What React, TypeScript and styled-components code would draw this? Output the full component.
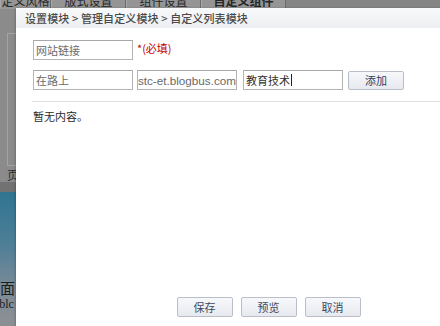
import React from 'react';
import styled, { createGlobalStyle } from 'styled-components';

const GlobalStyle = createGlobalStyle`
  html, body {
    margin: 0;
    padding: 0;
    width: 440px;
    height: 326px;
    overflow: hidden;
    font-family: "Noto Sans CJK SC", "Liberation Sans", sans-serif;
  }
`;

const cjk = `"Noto Sans CJK SC", "Liberation Sans", sans-serif`;

// Pagina de fondo, atenuada por el dialogo
const Page = styled.div`
  position: relative;
  width: 440px;
  height: 326px;
  overflow: hidden;
  display: flex;
  flex-direction: column;
  background: #8b8b8b;
`;

const TabBar = styled.div`
  height: 8px;
  display: flex;
  background: #858585;
  border-bottom: 1px solid #9a9a9a;
  overflow: hidden;
`;

const Tab = styled.div<{ width: number }>`
  width: ${({ width }) => width}px;
  height: 8px;
  flex: none;
  box-sizing: border-box;
  background: #959595;
  border-right: 1px solid #6a6a6a;
  border-left: 1px solid #a8a8a8;
  overflow: hidden;
`;

const TabText = styled.div<{ bold?: boolean }>`
  margin-top: -6px;
  font-family: ${cjk};
  font-size: 12px;
  font-weight: ${({ bold }) => (bold ? 700 : 400)};
  color: #262626;
  line-height: 14px;
  text-align: center;
  white-space: nowrap;
`;

const BackMain = styled.div`
  height: 183px;
  display: flex;
  flex-direction: column;
  padding: 24px 0 0 7px;
  box-sizing: border-box;
  border-bottom: 10px solid #727272;
`;

const BackPanel = styled.div`
  height: 137px;
  border: 1px solid #a3a3a3;
  border-right: none;
`;

const BackLabel = styled.div`
  font-family: ${cjk};
  font-size: 12px;
  color: #2a2a2a;
  line-height: 14px;
  margin-top: 2px;
`;

const BackBlue = styled.div`
  flex: 1;
  display: flex;
  flex-direction: column;
  justify-content: flex-end;
  padding: 0 0 14px 0;
  background: linear-gradient(180deg, #2f7591 0%, #4f7f97 40%, #7f8c98 75%, #8b8f93 100%);
`;

const BackText = styled.div<{ size: number; shift?: number }>`
  font-family: "Liberation Serif", ${cjk};
  font-size: ${({ size }) => size}px;
  color: #1e1e1e;
  line-height: 15px;
  white-space: nowrap;
  margin-left: ${({ shift }) => shift ?? 0}px;
`;

// Dialogo
const Dialog = styled.div`
  position: absolute;
  left: 16px;
  top: 8px;
  width: 505px;
  height: 330px;
  background: #ffffff;
  display: flex;
  flex-direction: column;
  box-shadow: -1px 0 2px rgba(0, 0, 0, 0.2);
`;

const Header = styled.div`
  height: 20px;
  padding-left: 9px;
  display: flex;
  align-items: center;
  background: linear-gradient(180deg, #f8f9fa 0%, #eceef1 100%);
  font-family: ${cjk};
  font-size: 11px;
  letter-spacing: 0.1px;
  color: #4a4a4a;
  font-weight: 500;
`;

const Body = styled.div`
  flex: 1;
  padding: 12px 0 0 17px;
  display: flex;
  flex-direction: column;
`;

const Row = styled.div`
  display: flex;
  align-items: center;
  margin-bottom: 10px;
`;

const Field = styled.div<{ gap?: number; dark?: boolean; mono?: boolean }>`
  width: 100px;
  height: 20px;
  box-sizing: border-box;
  margin-left: ${({ gap }) => gap ?? 0}px;
  border: 1px solid #b4b4b4;
  border-top-color: #a8a8a8;
  background: #fff;
  display: flex;
  align-items: center;
  padding: 0 2px;
  overflow: hidden;
  white-space: nowrap;
  font-family: ${({ mono }) => (mono ? `"Liberation Sans", sans-serif` : cjk)};
  font-size: 11px;
  color: ${({ dark }) => (dark ? '#2e2e2e' : '#6a6a6a')};
`;

const UrlField = styled(Field)`
  justify-content: flex-end;
  padding: 0;
  font-size: 11.7px;
`;

const Caret = styled.span`
  display: inline-block;
  width: 1px;
  height: 12px;
  background: #222;
  margin-left: 1px;
`;

const Required = styled.span`
  margin-left: 4px;
  margin-top: -5px;
  font-family: ${cjk};
  font-size: 11px;
  color: #c40000;
`;

const Button = styled.button<{ gap?: number }>`
  width: 56px;
  height: 19px;
  margin-left: ${({ gap }) => gap ?? 0}px;
  padding: 0;
  border: 1px solid #b9bec8;
  border-radius: 2px;
  background: linear-gradient(180deg, #f7f8fb 0%, #e6e9ef 100%);
  font-family: ${cjk};
  font-size: 11px;
  color: #27406b;
  line-height: 17px;
  cursor: pointer;
`;

const Divider = styled.div`
  height: 1px;
  background: #e2e2e2;
  margin: 1px 0 0 -1px;
`;

const Empty = styled.div`
  font-family: ${cjk};
  font-size: 11px;
  color: #2c2c2c;
  margin-top: 7px;
  line-height: 14px;
`;

const Footer = styled.div`
  display: flex;
  justify-content: center;
  gap: 8px;
  padding-bottom: 21px;
`;

const FooterButton = styled(Button)`
  height: 20px;
  color: #3a4a66;
`;

const tabs = [
  { label: '定义风格', width: 51 },
  { label: '版式设置', width: 75 },
  { label: '组件设置', width: 75 },
  { label: '自定义组件', width: 85, bold: true },
];

export default function App() {
  return (
    <>
      <GlobalStyle />
      <Page>
        <TabBar>
          {tabs.map((t) => (
            <Tab key={t.label} width={t.width}>
              <TabText bold={t.bold}>{t.label}</TabText>
            </Tab>
          ))}
        </TabBar>
        <BackMain>
          <BackPanel />
          <BackLabel>页</BackLabel>
        </BackMain>
        <BackBlue>
          <BackText size={15}>面 [</BackText>
          <BackText size={12} shift={-3}>'blc</BackText>
        </BackBlue>

        <Dialog>
          <Header>设置模块 &gt; 管理自定义模块 &gt; 自定义列表模块</Header>
          <Body>
            <Row>
              <Field>网站链接</Field>
              <Required>*(必填)</Required>
            </Row>
            <Row>
              <Field>在路上</Field>
              <UrlField gap={4} mono>http://jstc-et.blogbus.com</UrlField>
              <Field gap={6} dark>
                教育技术
                <Caret />
              </Field>
              <Button gap={5}>添加</Button>
            </Row>
            <Divider />
            <Empty>暂无内容。</Empty>
          </Body>
          <Footer>
            <FooterButton>保存</FooterButton>
            <FooterButton>预览</FooterButton>
            <FooterButton>取消</FooterButton>
          </Footer>
        </Dialog>
      </Page>
    </>
  );
}
